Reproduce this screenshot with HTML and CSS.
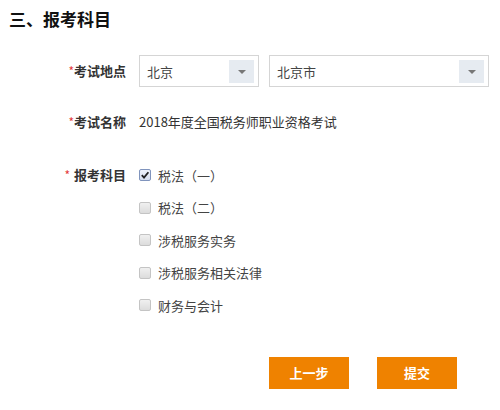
FILE: index.html
```html
<!DOCTYPE html>
<html lang="zh-CN">
<head>
<meta charset="utf-8">
<title>报考科目</title>
<link rel="stylesheet" href="styles.css">
</head>
<body>
<div class="page">
  <h2 class="title">三、报考科目</h2>
  <div class="form">
    <div class="row row-place">
      <div class="label"><span class="req">*</span>考试地点</div>
      <div class="field selects">
        <div class="select s1"><span class="val">北京</span><span class="arrow"></span></div>
        <div class="select s2"><span class="val">北京市</span><span class="arrow"></span></div>
      </div>
    </div>
    <div class="row row-name">
      <div class="label"><span class="req">*</span>考试名称</div>
      <div class="field text">2018年度全国税务师职业资格考试</div>
    </div>
    <div class="row row-subj">
      <div class="label lbl-subj"><span class="req sp">*</span>报考科目</div>
      <div class="field options">
        <label class="opt"><span class="cb checked"><svg viewBox="0 0 10 10" width="10" height="10"><path d="M1.8 5.2 L4 7.6 L8.4 2.2" fill="none" stroke="#222" stroke-width="1.8"/></svg></span>税法（一）</label>
        <label class="opt"><span class="cb"></span>税法（二）</label>
        <label class="opt"><span class="cb"></span>涉税服务实务</label>
        <label class="opt"><span class="cb"></span>涉税服务相关法律</label>
        <label class="opt"><span class="cb"></span>财务与会计</label>
      </div>
    </div>
  </div>
  <div class="actions">
    <button class="btn">上一步</button>
    <button class="btn">提交</button>
  </div>
</div>
</body>
</html>
```

FILE: styles.css
```css
html, body {
  margin: 0;
  padding: 0;
  background: #fff;
}
body {
  font-family: "Noto Sans CJK SC", "Noto Sans", sans-serif;
  color: #333;
  font-size: 13px;
}
.page {
  width: 500px;
  height: 410px;
  position: relative;
}
.title {
  margin: 0;
  padding: 8px 0 0 9px;
  font-size: 17px;
  line-height: 21px;
  font-weight: bold;
  color: #111;
}
.form {
  margin-top: 26px;
}
.row {
  display: grid;
  grid-template-columns: 126px 1fr;
  column-gap: 13px;
  align-items: center;
}
.label {
  text-align: right;
  font-weight: bold;
  color: #333;
  line-height: 32px;
}
.req {
  color: #e4393c;
  font-weight: normal;
  font-size: 12px;
}
.req.sp {
  margin-right: 4px;
}
.row-place {
  height: 32px;
}
.selects {
  display: flex;
  gap: 10px;
}
.select {
  box-sizing: border-box;
  height: 32px;
  border: 1px solid #d5d5d5;
  display: flex;
  align-items: center;
  justify-content: space-between;
  padding: 0 4px 0 7px;
}
.s1 { width: 120px; }
.s2 { width: 220px; }
.val {
  color: #444;
}
.arrow {
  width: 25px;
  height: 23px;
  background: #e6ebf1;
  position: relative;
}
.arrow::after {
  content: "";
  position: absolute;
  left: 9px;
  top: 10px;
  border-left: 4px solid transparent;
  border-right: 4px solid transparent;
  border-top: 4px solid #777;
}
.row-name {
  margin-top: 19px;
}
.text {
  line-height: 32px;
  color: #333;
}
.row-subj {
  margin-top: 21px;
  align-items: start;
}
.lbl-subj {
  line-height: 32.5px;
}
.options {
  display: flex;
  flex-direction: column;
}
.opt {
  display: flex;
  align-items: center;
  height: 32.5px;
  color: #444;
}
.cb {
  box-sizing: border-box;
  width: 12px;
  height: 12px;
  border: 1px solid #c4c4c4;
  background: linear-gradient(#f0f0f0, #dcdcdc);
  border-radius: 2px;
  margin-right: 7px;
  display: flex;
  align-items: center;
  justify-content: center;
}
.cb.checked {
  border-color: #8094bd;
  background: linear-gradient(#eef2fa, #d6deee);
}
.actions {
  display: flex;
  gap: 28px;
  margin: 35px 0 0 269px;
}
.btn {
  width: 80px;
  height: 32px;
  border: none;
  background: #ef8200;
  color: #fff;
  font-family: "Noto Sans CJK SC", "Noto Sans", sans-serif;
  font-size: 13px;
  font-weight: bold;
  padding: 0;
}
```
